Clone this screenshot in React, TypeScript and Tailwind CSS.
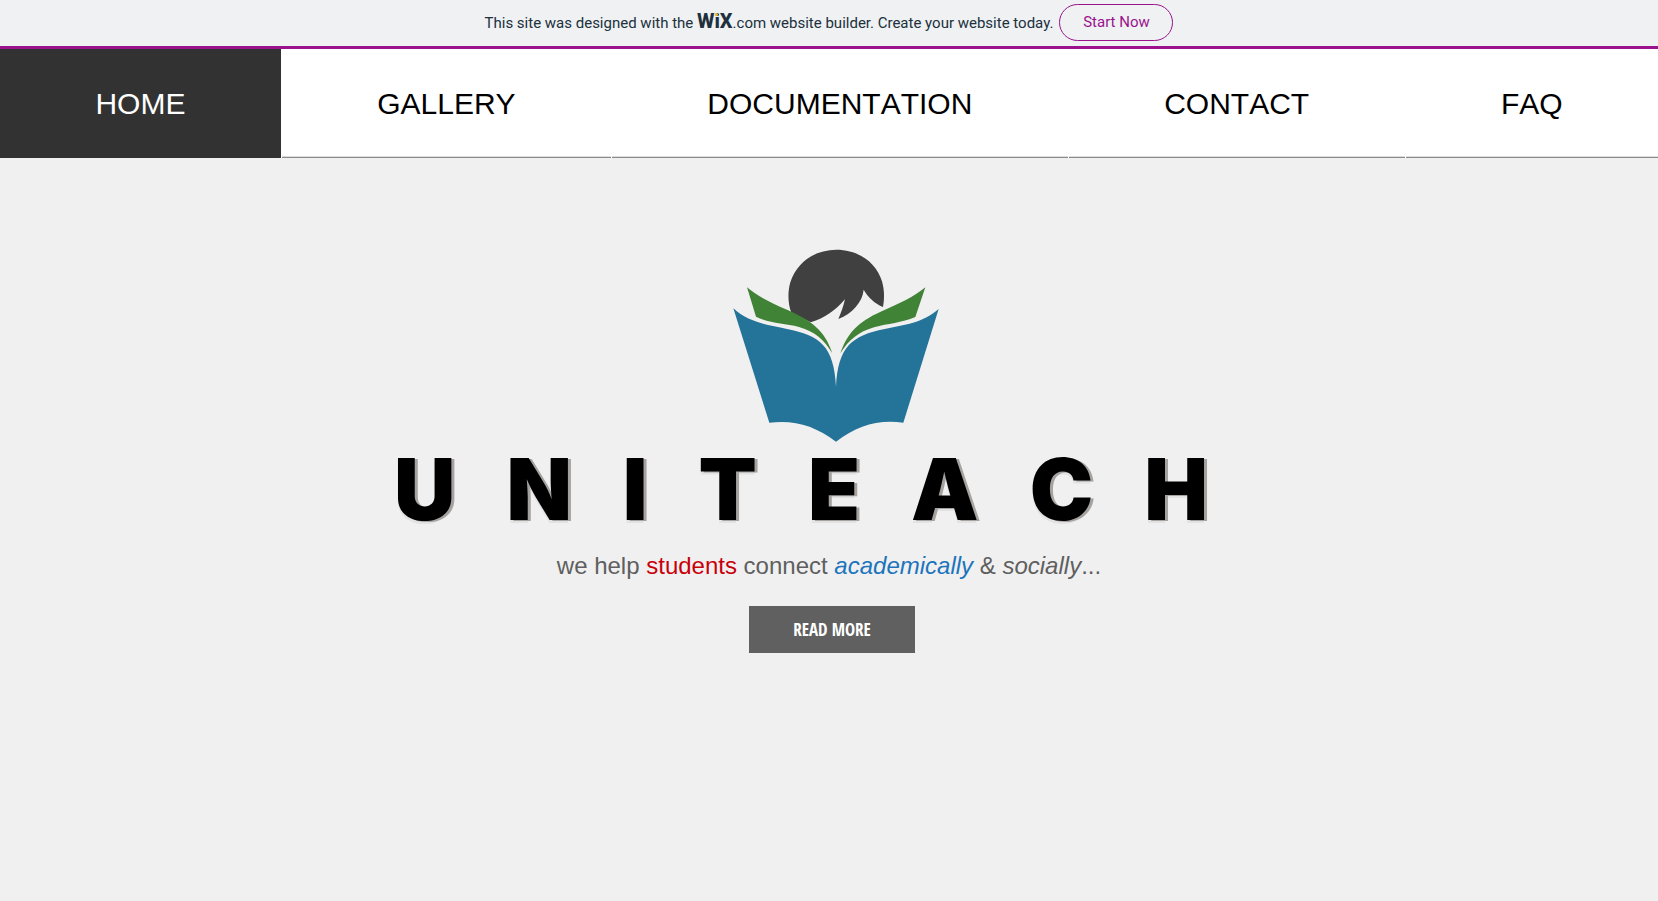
const navItems = ['HOME', 'GALLERY', 'DOCUMENTATION', 'CONTACT', 'FAQ'];

function WixLogo() {
  return (
    <span className="relative font-['Roboto',sans-serif] text-[20px] leading-none font-extrabold text-[#20303c]">
      WiX
      <span className="absolute top-[4px] left-[18px] size-[3px] rounded-full bg-[#fbbd14]" />
    </span>
  );
}

function Banner() {
  return (
    <div className="flex h-[49px] items-center justify-center border-b-3 border-[#9a138d] bg-[#eff1f3] pb-px font-['Roboto','Liberation_Sans',sans-serif] text-[15px] text-[#20303c]">
      <p className="whitespace-nowrap">
        This site was designed with the <WixLogo />
        .com website builder. Create your website today.
      </p>
      <a
        href="#start"
        className="ml-1.5 flex h-[37px] w-[114px] items-center justify-center rounded-full border border-[#9a138d] text-[#9a138d]"
      >
        Start Now
      </a>
    </div>
  );
}

function Navigation() {
  return (
    <nav className="flex h-[109px] gap-px bg-white text-[30px] [font-kerning:none]">
      {navItems.map((item, index) => (
        <a
          key={item}
          href={`#${item.toLowerCase()}`}
          aria-current={index === 0 ? 'page' : undefined}
          className={
            index === 0
              ? 'flex flex-auto items-center justify-center bg-[#323232] text-white'
              : 'flex flex-auto items-center justify-center border-b border-[#8c8a8c] text-black shadow-[inset_0_-1px_0_#dedede]'
          }
        >
          {item}
        </a>
      ))}
    </nav>
  );
}

function ReaderLogo() {
  return (
    <svg
      viewBox="0 27 690 579"
      className="ml-3 h-[193px] w-[230px]"
      role="img"
      aria-label="Student reading a book"
    >
      <path
        fill="#404040"
        d="M214 218C203 190 203 155 211 127C231 66 285 29 349 29C414 29 468 66 486 124C493 149 494 174 489 201C465 191 444 172 431 149C427 187 397 220 355 237C363 218 370 200 375 178C346 211 315 234 272 247Z"
      />
      <path
        fill="#408236"
        d="M81 142C119 174 160 191 203 210C274 242 314 270 337 340C312 299 286 275 237 261C193 249 149 251 108 230Z"
      />
      <path
        fill="#408236"
        d="M616 142C580 172 540 190 495 209C424 240 385 270 361 340C387 299 415 276 462 262C504 250 545 249 586 231Z"
      />
      <path
        fill="#247399"
        d="M40 205C91 251 141 252 201 267C299 286 342 318 348 440C354 320 395 287 494 267C554 254 607 250 656 207L550 548C472 538 412 557 348 605C285 557 224 539 148 548Z"
      />
    </svg>
  );
}

function Wordmark() {
  return (
    <h1
      aria-label="UNITEACH"
      className="mt-1 flex gap-[51px] pr-14 font-['Inter',sans-serif] text-[85px] leading-[88px] font-black text-black [text-shadow:3px_1px_0_#a5a2a0,0_3px_0_#e2e2e2]"
    >
      {'UNITEACH'.split('').map((letter) => (
        <span key={letter}>{letter}</span>
      ))}
    </h1>
  );
}

export default function App() {
  return (
    <div className="flex min-h-screen flex-col bg-[#f0f0f0] font-['Liberation_Sans',Arial,sans-serif]">
      <Banner />
      <Navigation />
      <main className="flex flex-col items-center pt-[91px]">
        <ReaderLogo />
        <Wordmark />
        <p className="mt-4 text-[24px] leading-8 text-[#5f5f5f]">
          we help <span className="text-[#c8000a]">students</span> connect{' '}
          <em className="text-[#1c75bc]">academically</em> &amp; <em>socially</em>...
        </p>
        <button
          type="button"
          className="mt-6 ml-1.5 h-[47px] w-[166px] bg-[#606060] font-['Open_Sans_Condensed','Noto_Sans_ExtraCondensed','Roboto_Condensed','Liberation_Sans_Narrow',sans-serif] text-[17px] font-bold text-white"
        >
          READ MORE
        </button>
      </main>
    </div>
  );
}
